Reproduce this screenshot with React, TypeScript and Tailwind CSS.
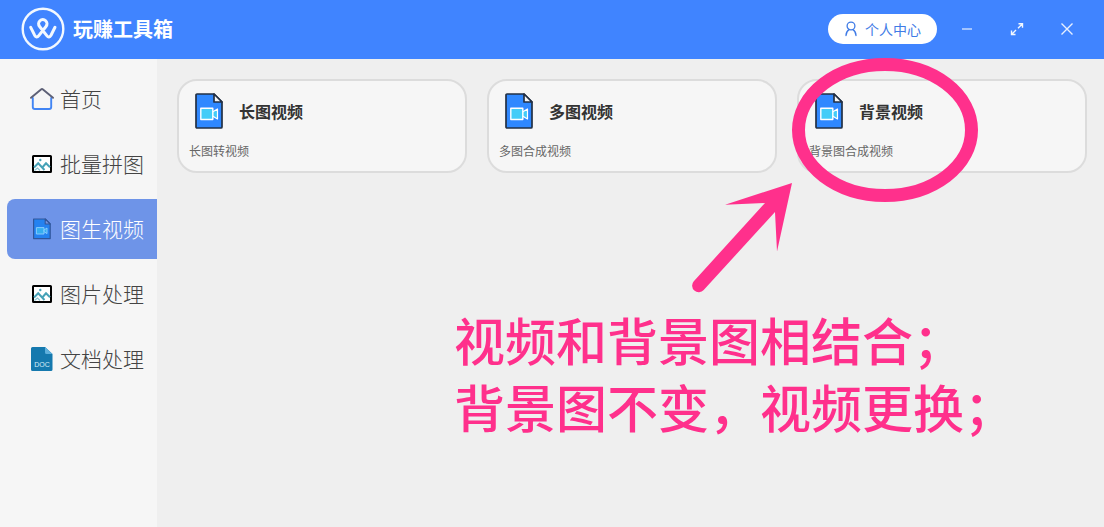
import React, { useState } from 'react';

const HomeIcon = () => (
  <svg width="24" height="24" viewBox="0 0 24 24" fill="none" strokeLinecap="round" strokeLinejoin="round">
    <path d="M2.8 11V20a2 2 0 0 0 2 2h14.400a2 2 0 0 0 2-2V11" stroke="#4285f4" strokeWidth="1.900" />
    <path d="M1 10.800 11 2.400a1.600 1.600 0 0 1 2 0L23 10.800" stroke="#5d6076" strokeWidth="1.900" />
  </svg>
);

const ImageIcon = () => (
  <svg width="24" height="24" viewBox="0 0 24 24" fill="none">
    <rect x="3" y="4" width="18" height="16" rx="0.5" fill="#fff" stroke="#000" strokeWidth="2" />
    <circle cx="10.300" cy="8" r="1.200" fill="#46a2b8" />
    <path d="M4 15.500 8.200 11.300 14.500 18M12.300 15.500 16 11.300 20 15.200" stroke="#46a2b8" strokeWidth="2" />
    <path d="M4.500 18.500 7.500 16 10 18.500" stroke="#8cc6d4" strokeWidth="1.200" />
  </svg>
);

const VideoFileIcon = ({ className }: { className: string }) => (
  <svg className={className} viewBox="0 0 28 36" fill="none" strokeLinejoin="round">
    <path d="M1 2a1 1 0 0 1 1-1h17l8 8v25a1 1 0 0 1-1 1H2a1 1 0 0 1-1-1Z" fill="#2f88ff" stroke="#233044" strokeWidth="1.700" />
    <path d="M19 1v8h8Z" fill="#f5f5f5" stroke="#233044" strokeWidth="1.700" />
    <path d="M17.500 19 22.500 16v10l-5-3Z" fill="#43ccf8" stroke="#fff" strokeWidth="1.200" />
    <rect x="5.800" y="15.300" width="12" height="11.200" fill="#43ccf8" stroke="#fff" strokeWidth="1.400" />
  </svg>
);

const SmallVideoIcon = () => (
  <svg width="24" height="24" viewBox="0 0 24 24" fill="none" strokeLinejoin="round">
    <path d="M3.600 2h11.600l5 5v14.600H3.600Z" fill="#2482f0" stroke="#31569a" strokeWidth="1.200" />
    <path d="M15.200 2v5h5Z" fill="#7b96e0" stroke="#31569a" strokeWidth="1.100" />
    <rect x="6.400" y="10.600" width="7.600" height="6.400" fill="#36aef0" stroke="#8fd0ff" strokeWidth="0.900" />
    <path d="m14 13 3-2v5.600l-3-2Z" fill="#36aef0" stroke="#8fd0ff" strokeWidth="0.900" />
  </svg>
);

const DocIcon = () => (
  <svg width="24" height="24" viewBox="0 0 24 24">
    <path d="M2.500 0H15l7.500 7v15.500a1.500 1.500 0 0 1-1.500 1.500H2.500A1.500 1.500 0 0 1 1 22.500V1.500A1.500 1.500 0 0 1 2.500 0Z" fill="#1579ae" />
    <path d="M15 0v5.500A1.500 1.500 0 0 0 16.500 7h6Z" fill="#5fb0dc" />
    <text x="12" y="20" textAnchor="middle" fontSize="7" fontFamily="Liberation Sans, sans-serif" fill="#d6ecf8">DOC</text>
  </svg>
);

const LogoIcon = () => (
  <svg width="44" height="44" viewBox="0 0 44 44" fill="none" stroke="#f2f8ff" strokeLinecap="round" strokeLinejoin="round">
    <circle cx="22" cy="22" r="20.300" strokeWidth="2.400" />
    <path d="M9.700 20.300 13.600 28.200Q15.500 31.600 17.800 28.600L25 19.500A4.200 4.200 0 1 0 18.600 19.500L25.800 28.600Q28.100 31.600 30 28.200L34 20.300" strokeWidth="3" />
  </svg>
);

const menu = [
  { name: '首页', icon: <HomeIcon /> },
  { name: '批量拼图', icon: <ImageIcon /> },
  { name: '图生视频', icon: <SmallVideoIcon /> },
  { name: '图片处理', icon: <ImageIcon /> },
  { name: '文档处理', icon: <DocIcon /> },
];

const tools = [
  { name: '长图视频', desc: '长图转视频' },
  { name: '多图视频', desc: '多图合成视频' },
  { name: '背景视频', desc: '背景图合成视频' },
];

const App = () => {
  const [active, setActive] = useState('图生视频');

  return (
    <div className="relative flex min-h-screen flex-col overflow-hidden bg-[#efefef] font-['Noto_Sans_CJK_SC',sans-serif]">
      {/* Title bar */}
      <header className="flex h-[59px] items-center bg-[#4084ff] pb-px pl-[21px] pr-3 text-white">
        <LogoIcon />
        <h1 className="ml-2 text-[20px] font-bold">玩赚工具箱</h1>
        <button className="ml-auto flex h-[30px] items-center gap-[7px] rounded-full bg-white px-4 text-sm text-[#3f7be6]">
          <svg width="14" height="16" viewBox="0 0 14 16" fill="none" stroke="currentColor" strokeWidth="1.300" strokeLinecap="round">
            <circle cx="7" cy="5" r="3.900" />
            <path d="M5 8.600Q2 10.500 2 14.500M9 8.600Q12 10.500 12 14.500" />
          </svg>
          个人中心
        </button>
        <div className="ml-[5px] flex">
          <button aria-label="最小化" className="flex h-[58px] w-[50px] items-center justify-center">
            <svg width="14" height="14" viewBox="0 0 14 14" stroke="#cfe0ff" strokeWidth="1.400"><path d="M2 7h10" /></svg>
          </button>
          <button aria-label="最大化" className="flex h-[58px] w-[50px] items-center justify-center">
            <svg width="14" height="14" viewBox="0 0 14 14" fill="none" stroke="#f2f7ff" strokeWidth="1.400">
              <path d="M8.500 1.700h4v4M12.500 1.700 8 6.200M5.500 12.500h-4v-4M1.500 12.500 6 8" />
            </svg>
          </button>
          <button aria-label="关闭" className="flex h-[58px] w-[50px] items-center justify-center">
            <svg width="14" height="14" viewBox="0 0 14 14" stroke="#e6efff" strokeWidth="1.400"><path d="m1.500 1.500 11 11M12.500 1.500l-11 11" /></svg>
          </button>
        </div>
      </header>

      <div className="flex flex-1">
        {/* Sidebar */}
        <nav className="flex w-[157px] shrink-0 flex-col gap-[5px] bg-[#f6f6f6] pl-[7px] pt-[10px]">
          {menu.map(item => (
            <button
              key={item.name}
              onClick={() => setActive(item.name)}
              className={`flex h-[60px] items-center gap-[6px] rounded-l-lg pl-[23px] text-[21px] font-light ${
                active === item.name ? 'bg-[#6e94e8] text-white' : 'text-[#444]'
              }`}
            >
              {item.icon}
              <span className="whitespace-nowrap">{item.name}</span>
            </button>
          ))}
        </nav>

        {/* Tool cards */}
        <main className="grid flex-1 grid-cols-3 content-start gap-5 pl-5 pr-[17px] pt-5">
          {tools.map(tool => (
            <button key={tool.name} className="rounded-[20px] border-2 border-[#dcdcdc] bg-[#f6f6f6] px-[10px] py-3 text-left">
              <span className="flex items-center gap-4 pl-[6px]">
                <VideoFileIcon className="h-9 w-7" />
                <span className="text-base font-bold text-[#333]">{tool.name}</span>
              </span>
              <span className="mt-[13px] block text-xs leading-[17px] text-[#666]">{tool.desc}</span>
            </button>
          ))}
        </main>
      </div>

      {/* Callout drawn over the page */}
      <div className="pointer-events-none absolute left-0 top-0 text-[#ff308c]">
        <svg width="1104" height="306" viewBox="0 0 1104 306">
          <ellipse cx="885" cy="130" rx="86.500" ry="65.500" fill="none" stroke="currentColor" strokeWidth="13" />
          <path d="M792 183 777 251.500 775 212 703.700 290A6.500 6.500 0 0 1 693.800 281.200L765 203 725 204.700Z" fill="currentColor" />
        </svg>
        <p className="pl-[454px] text-[51px] font-medium leading-[67px]">
          视频和背景图相结合；
          <br />
          背景图不变，视频更换；
        </p>
      </div>
    </div>
  );
};

export default App;
